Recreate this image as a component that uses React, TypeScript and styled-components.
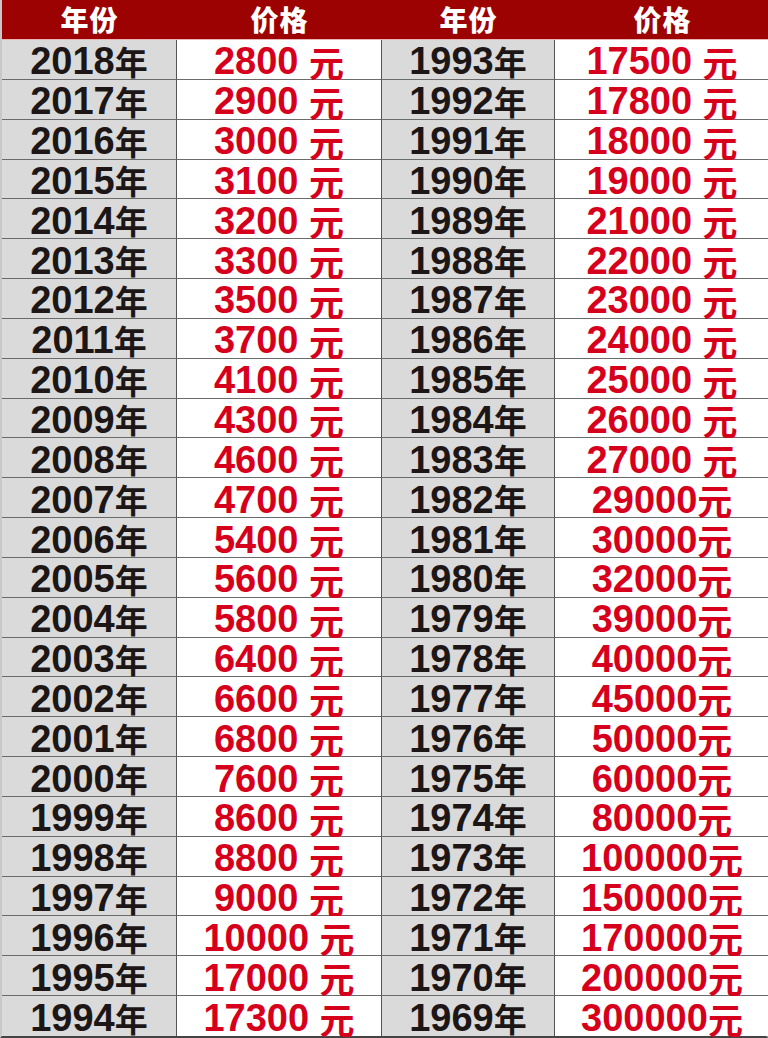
import React from 'react';
import styled, { createGlobalStyle } from 'styled-components';

const GlobalStyle = createGlobalStyle`
  body {
    margin: 0;
    padding: 0;
    background: #ffffff;
    font-family: "Liberation Sans", "Noto Sans CJK SC", sans-serif;
  }
`;

const left: [number, string][] = [
  [2018, '2800 '], [2017, '2900 '], [2016, '3000 '], [2015, '3100 '], [2014, '3200 '],
  [2013, '3300 '], [2012, '3500 '], [2011, '3700 '], [2010, '4100 '], [2009, '4300 '],
  [2008, '4600 '], [2007, '4700 '], [2006, '5400 '], [2005, '5600 '], [2004, '5800 '],
  [2003, '6400 '], [2002, '6600 '], [2001, '6800 '], [2000, '7600 '], [1999, '8600 '],
  [1998, '8800 '], [1997, '9000 '], [1996, '10000 '], [1995, '17000 '], [1994, '17300 '],
];

const right: [number, string][] = [
  [1993, '17500 '], [1992, '17800 '], [1991, '18000 '], [1990, '19000 '], [1989, '21000 '],
  [1988, '22000 '], [1987, '23000 '], [1986, '24000 '], [1985, '25000 '], [1984, '26000 '],
  [1983, '27000 '], [1982, '29000'], [1981, '30000'], [1980, '32000'], [1979, '39000'],
  [1978, '40000'], [1977, '45000'], [1976, '50000'], [1975, '60000'], [1974, '80000'],
  [1973, '100000'], [1972, '150000'], [1971, '170000'], [1970, '200000'], [1969, '300000'],
];

const Table = styled.div`
  display: grid;
  grid-template-columns: 175px 205px 173px 215px;
  grid-template-rows: 40px repeat(25, minmax(0, 1fr));
  width: 768px;
  height: 1038px;
  box-sizing: border-box;
  border-left: 2px solid #c8c8c8;
  border-right: 2px solid #9a9a9a;
  border-bottom: 2px solid #444;
`;

const HeaderCell = styled.div`
  display: flex;
  align-items: center;
  justify-content: center;
  background: #9c0202;
  color: #ffffff;
  font-family: "Noto Sans CJK SC", sans-serif;
  font-weight: 900;
  font-size: 28px;
  letter-spacing: 1px;
  border-bottom: 1px solid #e8b4b4;
  padding-bottom: 2px;
`;

const Cell = styled.div<{ $grey?: boolean; $last?: boolean }>`
  display: flex;
  align-items: center;
  justify-content: center;
  padding-top: 4px;
  min-height: 0;
  box-sizing: border-box;
  background: ${p => (p.$grey ? '#dadada' : '#ffffff')};
  border-bottom: ${p => (p.$last ? 'none' : '1px solid #6a6a6a')};
  border-right: 1px solid #555;
  font-family: "Liberation Sans", "Noto Sans CJK SC", sans-serif;
  font-weight: 700;
  font-size: 38px;
  line-height: 1;
  white-space: pre;
`;

const YearCell = styled(Cell)`
  color: #1c1616;
`;

const PriceCell = styled(Cell)`
  color: #d6001c;
`;

const Unit = styled.span<{ $size: number }>`
  display: inline-block;
  font-family: "Noto Sans CJK SC", sans-serif;
  font-weight: 700;
  font-size: ${p => p.$size}px;
  line-height: 1;
`;

const App: React.FC = () => {
  const cells: React.ReactNode[] = [];
  left.forEach((l, i) => {
    const r = right[i];
    const last = i === left.length - 1;
    cells.push(
      <YearCell key={`ly${i}`} $grey $last={last}>{l[0]}<Unit $size={33}>年</Unit></YearCell>,
      <PriceCell key={`lp${i}`} $last={last}>{l[1]}<Unit $size={35}>元</Unit></PriceCell>,
      <YearCell key={`ry${i}`} $grey $last={last}>{r[0]}<Unit $size={33}>年</Unit></YearCell>,
      <PriceCell key={`rp${i}`} $last={last}>{r[1]}<Unit $size={35}>元</Unit></PriceCell>,
    );
  });

  return (
    <>
      <GlobalStyle />
      <Table>
        <HeaderCell>年份</HeaderCell>
        <HeaderCell>价格</HeaderCell>
        <HeaderCell>年份</HeaderCell>
        <HeaderCell>价格</HeaderCell>
        {cells}
      </Table>
    </>
  );
};

export default App;
